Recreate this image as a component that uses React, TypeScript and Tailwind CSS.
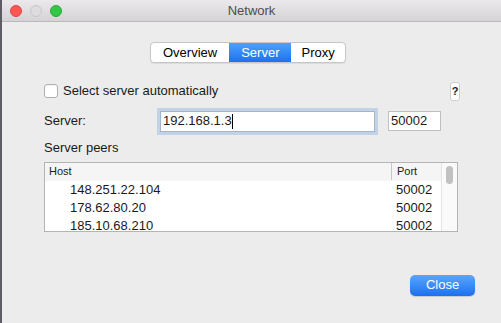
import React from "react";

const peers = [
  { host: "148.251.22.104", port: "50002" },
  { host: "178.62.80.20", port: "50002" },
  { host: "185.10.68.210", port: "50002" },
];

function TrafficLights() {
  return (
    <div className="absolute left-[8px] top-[5px] flex gap-[8px]">
      <span className="w-[12px] h-[12px] rounded-full bg-[#fc5753] border border-[#df4744]" />
      <span className="w-[12px] h-[12px] rounded-full bg-[#dcdcdc] border border-[#c8c8c8]" />
      <span className="w-[12px] h-[12px] rounded-full bg-[#33c748] border border-[#27aa35]" />
    </div>
  );
}

function Tabs() {
  return (
    <div className="flex h-[21px] rounded-[4px] border border-[#c6c6c6] bg-white shadow-[0_1px_1px_rgba(0,0,0,0.08)] overflow-hidden text-[13px]">
      <div className="flex items-center px-[12px] text-black">Overview</div>
      <div className="flex items-center px-[12px] bg-gradient-to-b from-[#4fa0fb] to-[#1a72ef] text-white">Server</div>
      <div className="flex items-center px-[10px] text-black">Proxy</div>
    </div>
  );
}

export default function App() {
  return (
    <div
      className="relative w-[501px] h-[323px] bg-[#ececec] border-l-2 border-[#5d5c63] overflow-hidden text-[#1a1a1a]"
      style={{ fontFamily: '"Liberation Sans", Arial, sans-serif' }}
    >
      {/* Title bar */}
      <div className="relative h-[22px] bg-gradient-to-b from-[#ebe9eb] to-[#d5d3d5] border-b border-[#b9b9b9] flex items-center justify-center">
        <TrafficLights />
        <span className="text-[13px] text-[#4d4d4d]">Network</span>
      </div>

      <div className="flex flex-col pl-[42px] pr-[26px]">
        <div className="flex pt-[20px] pl-[106px]">
          <Tabs />
        </div>

        {/* Auto select */}
        <div className="flex items-center justify-between mt-[18px] h-[20px]">
          <label className="flex items-center gap-[5px] text-[13px]">
            <span className="w-[14px] h-[14px] rounded-[3px] border border-[#b0b0b0] bg-white shadow-[inset_0_1px_1px_rgba(0,0,0,0.05)]" />
            Select server automatically
          </label>
          <span className="mr-[15px] w-[10px] h-[19px] rounded-[3px] bg-white border border-[#cfcfcf] flex items-center justify-center text-[11px] font-bold">
            ?
          </span>
        </div>

        {/* Server row */}
        <div className="flex items-center mt-[9px] h-[22px]">
          <span className="w-[116px] text-[13px]">Server:</span>
          <div className="w-[215px] h-[21px] bg-white border border-[#a7b5c9] ring-[3px] ring-[#c2d3e8] flex items-center pl-[2px] text-[13px]">
            192.168.1.3
            <span className="w-[1px] h-[15px] bg-black" />
          </div>
          <div className="ml-[13px] w-[53px] h-[20px] bg-white border border-[#c0c0c0] flex items-center pl-[2px] text-[13px]">
            50002
          </div>
        </div>

        {/* Peers */}
        <div className="mt-[6px] text-[13px]">Server peers</div>
        <div className="mt-[4px] w-[414px] h-[70px] border border-[#b4b4b4] bg-white flex overflow-hidden">
          <div className="flex-1 flex flex-col">
            <div className="h-[18px] flex items-center bg-[#f5f5f5] text-[11px] text-[#222] shrink-0">
              <span className="flex-1 pl-[4px]">Host</span>
              <span className="w-[50px] border-l border-[#c8c8c8] pl-[5px]">Port</span>
            </div>
            {peers.map((p) => (
              <div key={p.host} className="h-[18px] flex items-center text-[13px] shrink-0">
                <span className="flex-1 pl-[25px]">{p.host}</span>
                <span className="w-[50px] pl-[5px]">{p.port}</span>
              </div>
            ))}
          </div>
          <div className="w-[16px] border-l border-[#e4e4e4] bg-[#fafafa] flex justify-center pt-[3px]">
            <span className="w-[7px] h-[18px] rounded-full bg-[#c1c1c1]" />
          </div>
        </div>

        {/* Close */}
        <div className="flex justify-end mt-[43px]">
          <button className="w-[65px] h-[21px] rounded-[5px] bg-gradient-to-b from-[#5aa6fc] to-[#1b6ff0] text-white text-[13px] shadow-[0_1px_1px_rgba(0,0,0,0.15)]">
            Close
          </button>
        </div>
      </div>
    </div>
  );
}
